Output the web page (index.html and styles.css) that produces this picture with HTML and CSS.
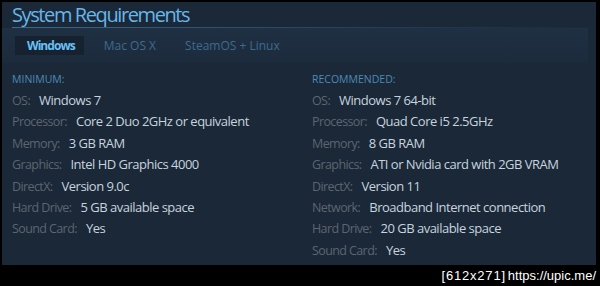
FILE: index.html
```html
<!DOCTYPE html>
<html>
<head>
<meta charset="utf-8">
<link rel="stylesheet" href="styles.css">
</head>
<body>
<div class="panel">
  <h2 class="title">System Requirements</h2>
  <div class="tabs">
    <span class="tab active">Windows</span>
    <span class="tab">Mac OS X</span>
    <span class="tab">SteamOS + Linux</span>
  </div>
  <div class="cols">
    <div class="col">
      <div class="head">MINIMUM:</div>
      <div class="row"><span class="k">OS:</span><span class="v">Windows 7</span></div>
      <div class="row"><span class="k">Processor:</span><span class="v">Core 2 Duo 2GHz or equivalent</span></div>
      <div class="row"><span class="k">Memory:</span><span class="v">3 GB RAM</span></div>
      <div class="row"><span class="k">Graphics:</span><span class="v">Intel HD Graphics 4000</span></div>
      <div class="row"><span class="k">DirectX:</span><span class="v">Version 9.0c</span></div>
      <div class="row"><span class="k">Hard Drive:</span><span class="v">5 GB available space</span></div>
      <div class="row"><span class="k">Sound Card:</span><span class="v">Yes</span></div>
    </div>
    <div class="col">
      <div class="head">RECOMMENDED:</div>
      <div class="row"><span class="k">OS:</span><span class="v">Windows 7 64-bit</span></div>
      <div class="row"><span class="k">Processor:</span><span class="v">Quad Core i5 2.5GHz</span></div>
      <div class="row"><span class="k">Memory:</span><span class="v">8 GB RAM</span></div>
      <div class="row"><span class="k">Graphics:</span><span class="v">ATI or Nvidia card with 2GB VRAM</span></div>
      <div class="row"><span class="k">DirectX:</span><span class="v">Version 11</span></div>
      <div class="row"><span class="k">Network:</span><span class="v">Broadband Internet connection</span></div>
      <div class="row"><span class="k">Hard Drive:</span><span class="v">20 GB available space</span></div>
      <div class="row"><span class="k">Sound Card:</span><span class="v">Yes</span></div>
    </div>
  </div>
</div>
<div class="footer"><span class="mark">[612x271]</span><span class="url">https://upic.me/</span></div>
</body>
</html>
```
FILE: styles.css
```css
html, body {
  margin: 0;
  padding: 0;
  background: #000;
}
body {
  width: 600px;
  height: 286px;
  overflow: hidden;
  font-family: "Open Sans", "Noto Sans", sans-serif;
}
.panel {
  margin: 2px 4px 0 2px;
  height: 263px;
  box-sizing: border-box;
  background: #1b2838;
  padding: 0 0 0 10px;
}
.title {
  margin: 0;
  font-weight: normal;
  font-size: 20px;
  letter-spacing: -1.4px;
  line-height: 25px;
  color: #67b6e8;
  border-bottom: 1px solid;
  border-image: linear-gradient(to right, #3a6a8e 0%, #2a4660 50%, #1b2838 100%) 1;
}
.tabs {
  display: flex;
  align-items: center;
  height: 35px;
  margin-left: -10px;
  padding-left: 13px;
  margin-right: 8px;
  background: linear-gradient(to bottom, #1f3043 0%, #1c2b3c 100%);
  font-size: 12px;
}
.tab {
  padding: 0 9px 0 12px;
  line-height: 19px;
  margin-right: 8px;
  color: #3d6b8e;
}
.tab.active {
  background: #16222f;
  color: #67c1f5;
  font-weight: bold;
  letter-spacing: -0.95px;
}
.cols {
  display: grid;
  grid-template-columns: 300px 1fr;
  padding-top: 8px;
}
.head {
  font-size: 10.5px;
  color: #4b8bb6;
  line-height: 16px;
  margin-bottom: 3px;
}
.row {
  font-size: 13px;
  line-height: 21.4px;
  white-space: nowrap;
}
.k {
  color: #5b656f;
  font-size: 12.5px;
  letter-spacing: -0.6px;
  margin-right: 9px;
}
.v {
  color: #c6d4df;
  letter-spacing: -0.5px;
}
.footer {
  display: flex;
  justify-content: flex-end;
  padding-right: 4px;
  color: #fff;
  font-family: "Liberation Sans", sans-serif;
  font-size: 13px;
  line-height: 21px;
}
.mark {
  letter-spacing: 0.8px;
}
.url {
  margin-left: 2px;
}
```
